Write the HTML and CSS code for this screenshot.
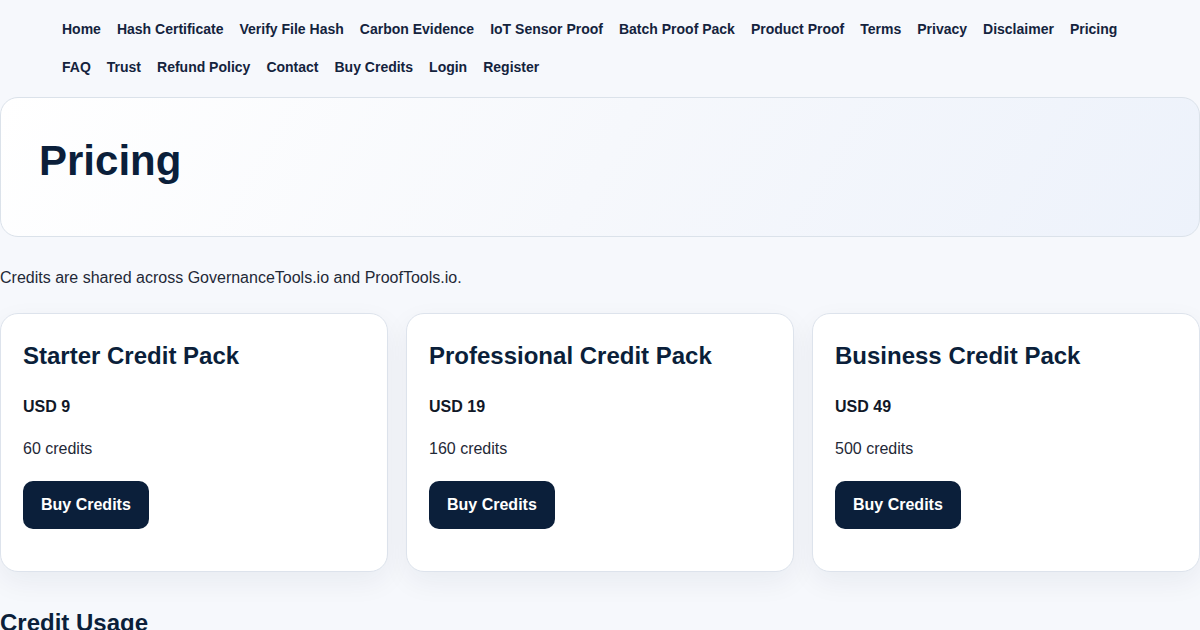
FILE: index.html
```html
<!DOCTYPE html>
<html lang="en">
<head>
<meta charset="utf-8">
<title>Pricing</title>
<link rel="stylesheet" href="styles.css">
</head>
<body>
<nav class="nav">
  <a href="#">Home</a>
  <a href="#">Hash Certificate</a>
  <a href="#">Verify File Hash</a>
  <a href="#">Carbon Evidence</a>
  <a href="#">IoT Sensor Proof</a>
  <a href="#">Batch Proof Pack</a>
  <a href="#">Product Proof</a>
  <a href="#">Terms</a>
  <a href="#">Privacy</a>
  <a href="#">Disclaimer</a>
  <a href="#">Pricing</a>
  <a href="#">FAQ</a>
  <a href="#">Trust</a>
  <a href="#">Refund Policy</a>
  <a href="#">Contact</a>
  <a href="#">Buy Credits</a>
  <a href="#">Login</a>
  <a href="#">Register</a>
</nav>
<main class="main">
  <section class="hero">
    <h1>Pricing</h1>
  </section>
  <p class="intro">Credits are shared across GovernanceTools.io and ProofTools.io.</p>
  <div class="plans">
    <div class="card">
      <h2>Starter Credit Pack</h2>
      <p class="price">USD 9</p>
      <p class="credits">60 credits</p>
      <a class="btn" href="#">Buy Credits</a>
    </div>
    <div class="card">
      <h2>Professional Credit Pack</h2>
      <p class="price">USD 19</p>
      <p class="credits">160 credits</p>
      <a class="btn" href="#">Buy Credits</a>
    </div>
    <div class="card">
      <h2>Business Credit Pack</h2>
      <p class="price">USD 49</p>
      <p class="credits">500 credits</p>
      <a class="btn" href="#">Buy Credits</a>
    </div>
  </div>
  <h2 class="section-title">Credit Usage</h2>
</main>
</body>
</html>
```

FILE: styles.css
```css
* { box-sizing: border-box; }
html, body {
  margin: 0;
  padding: 0;
  background: #f6f8fc;
  font-family: "Liberation Sans", Arial, sans-serif;
  color: #1e293b;
}
.nav {
  display: flex;
  flex-wrap: wrap;
  column-gap: 16px;
  padding: 10px 62px 11px;
  max-width: 1200px;
}
.nav a {
  font-size: 14px;
  font-weight: 700;
  line-height: 22px;
  padding: 8px 0;
  color: #14233d;
  text-decoration: none;
}
.hero {
  border: 1px solid #dbe2ea;
  border-radius: 18px;
  background: linear-gradient(120deg, #ffffff 0%, #f6f8fc 50%, #edf2fb 100%);
  padding: 39px 38px 51px;
}
.hero h1 {
  margin: 0;
  font-size: 42px;
  line-height: 48px;
  font-weight: 700;
  color: #0b1f3a;
}
.intro {
  margin: 28px 0 22px;
  font-size: 16px;
  line-height: 26px;
  color: #1f2937;
}
.plans {
  display: grid;
  grid-template-columns: repeat(3, 1fr);
  gap: 18px;
}
.card {
  background: #ffffff;
  border: 1px solid #dde3ec;
  border-radius: 18px;
  padding: 27px 22px 42px;
  box-shadow: 0 10px 28px rgba(15, 30, 60, 0.06);
  display: flex;
  flex-direction: column;
  align-items: flex-start;
}
.card h2 {
  margin: 0 0 24px;
  font-size: 24px;
  line-height: 29px;
  font-weight: 700;
  color: #0b1f3a;
}
.price {
  margin: 0 0 16px;
  font-size: 16px;
  line-height: 26px;
  font-weight: 700;
  color: #111827;
}
.credits {
  margin: 0 0 19px;
  font-size: 16px;
  line-height: 26px;
  color: #1f2937;
}
.btn {
  display: inline-block;
  background: #0b1f3a;
  color: #ffffff;
  font-size: 16px;
  font-weight: 700;
  line-height: 26px;
  padding: 11px 18px;
  border-radius: 10px;
  text-decoration: none;
}
.section-title {
  margin: 36px 0 0;
  font-size: 24px;
  line-height: 29px;
  font-weight: 700;
  color: #0b1f3a;
}
```
